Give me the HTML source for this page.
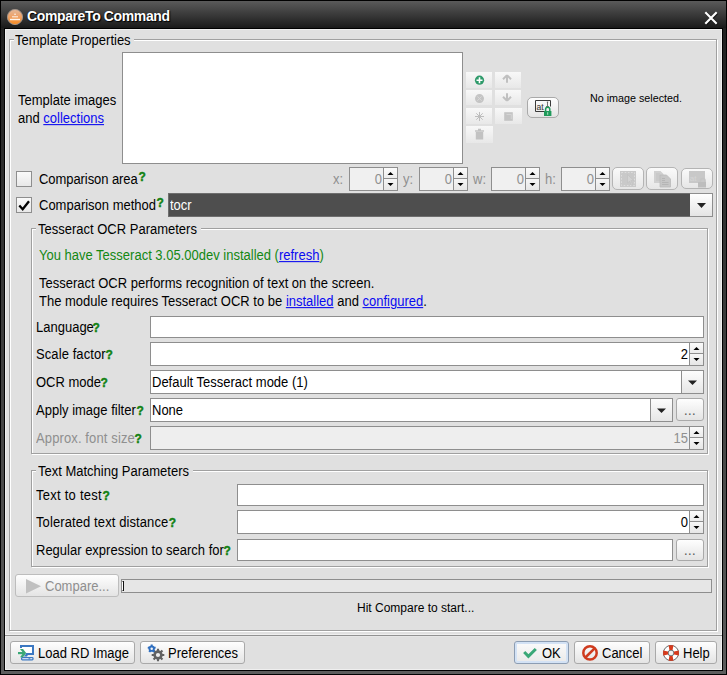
<!DOCTYPE html>
<html><head><meta charset="utf-8">
<style>
*{margin:0;padding:0;box-sizing:border-box}
html,body{width:727px;height:675px;overflow:hidden;background:#000}
body{position:relative;font-family:"Liberation Sans",sans-serif;font-size:13px;color:#000}
.a{position:absolute}
svg.a{overflow:visible}
.t{position:absolute;font-size:13px;line-height:15px;white-space:pre;color:#000;transform:scaleY(1.08);transform-origin:0 12px}
.q{color:#138213;font-weight:bold;font-size:12px;-webkit-text-stroke:0.4px #138213}
.lnk{color:#0a0af0;text-decoration:underline}
.dis{color:#8f8f8f}
.tb{position:absolute;background:linear-gradient(#f8f8f8,#e8e8e8)}
</style></head><body>

<div class="a" style="left:1px;top:1px;width:725px;height:673px;background:linear-gradient(#1e1e1e,#5c5c5c)"></div>
<div class="a" style="left:4px;top:28px;width:719px;height:643px;background:#000"></div>
<div class="a" style="left:1px;top:1px;width:725px;height:27px;background:linear-gradient(#5a5a5a,#1a1a1a)"></div>
<svg class="a" style="left:6px;top:8px;" width="18" height="18" viewBox="0 0 18 18"><defs><linearGradient id="ig" x1="0" y1="0" x2="0" y2="1"><stop offset="0" stop-color="#e2b89a"/><stop offset="0.45" stop-color="#eea36a"/><stop offset="1" stop-color="#f78a1e"/></linearGradient></defs>
<circle cx="9" cy="9" r="7.6" fill="url(#ig)" stroke="#a09288" stroke-width="1"/>
<rect x="8.3" y="5.6" width="1.5" height="1.3" fill="#fff" opacity="0.85"/>
<rect x="6" y="8.2" width="6" height="1.2" fill="#fff" opacity="0.75"/>
<rect x="4" y="10.8" width="10" height="1.4" fill="#fff" opacity="0.9"/></svg>
<div class="t" style="left:27px;top:9px;color:#fff;font-weight:bold;font-size:14px;letter-spacing:-0.38px;text-shadow:0 0 1px #000,1px 1px 1px #000">CompareTo Command</div>
<svg class="a" style="left:703px;top:10px;" width="16" height="16" viewBox="0 0 16 16"><path d="M2.3 2.3L13.7 13.7M13.7 2.3L2.3 13.7" stroke="#000" stroke-width="2.6" opacity="0.5" transform="translate(0.7,0.7)"/><path d="M2.3 2.3L13.7 13.7M13.7 2.3L2.3 13.7" stroke="#fff" stroke-width="2.1"/></svg>
<div class="a" style="left:5px;top:29px;width:717px;height:606px;background:#e0e0e0;border:1px solid #efefef"></div>
<div class="a" style="left:5px;top:635px;width:717px;height:1px;background:#929292"></div>
<div class="a" style="left:5px;top:636px;width:717px;height:34px;background:#e0e0e0;border:1px solid #efefef;border-top-color:#e6e6e6"></div>
<div class="a" style="left:9px;top:39px;width:708px;height:592px;border:1px solid #a0a0a0;box-shadow:1px 1px 0 #fff,inset 1px 1px 0 #fff"></div>
<div class="a" style="left:14px;top:38px;width:120px;height:4px;background:#e0e0e0"></div>
<div class="t" style="left:15px;top:33px;">Template Properties</div>
<div class="t" style="left:18px;top:93px;">Template images</div>
<div class="t" style="left:18px;top:111px;">and <span class="lnk">collections</span></div>
<div class="a" style="left:122px;top:52px;width:341px;height:112px;background:#fff;border:1px solid #8e8e8e"></div>
<div class="tb" style="left:466px;top:72px;width:26px;height:16px"></div>
<div class="tb" style="left:495px;top:72px;width:26px;height:16px"></div>
<div class="tb" style="left:466px;top:90px;width:26px;height:15px"></div>
<div class="tb" style="left:495px;top:90px;width:26px;height:15px"></div>
<div class="tb" style="left:466px;top:108px;width:26px;height:16px"></div>
<div class="tb" style="left:495px;top:108px;width:27px;height:16px"></div>
<div class="tb" style="left:466px;top:126px;width:27px;height:17px"></div>
<svg class="a" style="left:466px;top:72px;" width="56" height="72" viewBox="0 0 56 72">
 <circle cx="13.5" cy="8.2" r="4.6" fill="#2e9a6a"/>
 <path d="M13.5 5.2v6M10.5 8.2h6" stroke="#fff" stroke-width="1.6"/>
 <circle cx="13.5" cy="26.6" r="4.5" fill="#c4c4c4"/>
 <path d="M11.3 24.4l4.4 4.4M15.7 24.4l-4.4 4.4" stroke="#d8d8d8" stroke-width="1"/>
 <path d="M13.5 40v9M9 44.5h9M10.3 41.3l6.4 6.4M16.7 41.3l-6.4 6.4" stroke="#bdbdbd" stroke-width="1"/>
 <path d="M9 59h9M12 57.5h3" stroke="#c2c2c2" stroke-width="1.4"/>
 <rect x="9.8" y="60" width="7.4" height="7.5" fill="#c2c2c2"/>
 <path d="M41 3.2l-4 4M41 3.2l4 4M41 3.8v7" stroke="#c0c0c0" stroke-width="2"/>
 <path d="M41 28.8l-4-4M41 28.8l4-4M41 28.2v-7" stroke="#c0c0c0" stroke-width="2"/>
 <rect x="38.2" y="40.2" width="8.6" height="8.6" fill="#c4c4c4"/>
 <path d="M40.5 42.5h4.8v4.5" stroke="#d4d4d4" stroke-width="1" fill="none"/></svg>
<div class="a" style="left:527px;top:97px;width:32px;height:21px;border:1px solid #a9a9a9;border-radius:3px;background:linear-gradient(#fefefe,#e4e4e4);border-radius:5px"></div>
<svg class="a" style="left:534px;top:99px;" width="20" height="18" viewBox="0 0 20 18">
 <path d="M1.5 1.5h15v6M10 12.5H1.5v-11" stroke="#3a3a3a" stroke-width="1" fill="none"/>
 <text x="2.6" y="10.6" font-family="Liberation Sans" font-size="8.5" fill="#333">at</text>
 <path d="M13.5 3v4.5M12 7.5h3M12.8 3h1.4" stroke="#555" stroke-width="0.8"/>
 <path d="M11.6 12.5V10.3a2.1 2.1 0 0 1 4.2 0V12.5" stroke="#1f9a5a" stroke-width="1.5" fill="none"/>
 <rect x="10" y="12" width="7.4" height="5" fill="#1f9a5a"/>
 <path d="M13.7 13.2v2.6" stroke="#bfe6cf" stroke-width="0.9"/></svg>
<div class="a" style="left:590px;top:92px;font-size:10.75px;line-height:13px;white-space:pre">No image selected.</div>
<div class="a" style="left:16px;top:171px;width:16px;height:16px;border:1px solid #8e8e8e;background:linear-gradient(#fafafa,#e8e8e8)"></div>
<div class="t" style="left:39px;top:172px;letter-spacing:-0.07px">Comparison area</div>
<div class="t q" style="left:138.5px;top:170px;">?</div>
<div class="t dis" style="left:333px;top:172px;">x:</div>
<div class="t dis" style="left:403px;top:172px;">y:</div>
<div class="t dis" style="left:473px;top:172px;">w:</div>
<div class="t dis" style="left:545px;top:172px;">h:</div>
<div class="a" style="left:349px;top:167px;width:49px;height:24px;background:#f0f0f0;border:1px solid #8e8e8e"></div>
<div class="a" style="left:383px;top:168px;width:1px;height:22px;background:#8e8e8e"></div>
<div class="a" style="left:384px;top:168px;width:13px;height:10px;background:linear-gradient(#fbfbfb,#ececec)"></div>
<div class="a" style="left:384px;top:178px;width:13px;height:1px;background:#8e8e8e"></div>
<div class="a" style="left:384px;top:179px;width:13px;height:11px;background:linear-gradient(#f6f6f6,#e6e6e6)"></div>
<svg class="a" style="left:384px;top:167px;" width="13" height="23" viewBox="0 0 13 23"><polygon points="3.5,8.0 9.5,8.0 6.5,5.0" fill="#000"/><polygon points="3.5,16.0 9.5,16.0 6.5,19.0" fill="#000"/></svg>
<div class="t" style="left:282px;width:100px;text-align:right;top:172px;color:#8f8f8f">0</div>
<div class="a" style="left:419px;top:167px;width:49px;height:24px;background:#f0f0f0;border:1px solid #8e8e8e"></div>
<div class="a" style="left:453px;top:168px;width:1px;height:22px;background:#8e8e8e"></div>
<div class="a" style="left:454px;top:168px;width:13px;height:10px;background:linear-gradient(#fbfbfb,#ececec)"></div>
<div class="a" style="left:454px;top:178px;width:13px;height:1px;background:#8e8e8e"></div>
<div class="a" style="left:454px;top:179px;width:13px;height:11px;background:linear-gradient(#f6f6f6,#e6e6e6)"></div>
<svg class="a" style="left:454px;top:167px;" width="13" height="23" viewBox="0 0 13 23"><polygon points="3.5,8.0 9.5,8.0 6.5,5.0" fill="#000"/><polygon points="3.5,16.0 9.5,16.0 6.5,19.0" fill="#000"/></svg>
<div class="t" style="left:352px;width:100px;text-align:right;top:172px;color:#8f8f8f">0</div>
<div class="a" style="left:491px;top:167px;width:49px;height:24px;background:#f0f0f0;border:1px solid #8e8e8e"></div>
<div class="a" style="left:525px;top:168px;width:1px;height:22px;background:#8e8e8e"></div>
<div class="a" style="left:526px;top:168px;width:13px;height:10px;background:linear-gradient(#fbfbfb,#ececec)"></div>
<div class="a" style="left:526px;top:178px;width:13px;height:1px;background:#8e8e8e"></div>
<div class="a" style="left:526px;top:179px;width:13px;height:11px;background:linear-gradient(#f6f6f6,#e6e6e6)"></div>
<svg class="a" style="left:526px;top:167px;" width="13" height="23" viewBox="0 0 13 23"><polygon points="3.5,8.0 9.5,8.0 6.5,5.0" fill="#000"/><polygon points="3.5,16.0 9.5,16.0 6.5,19.0" fill="#000"/></svg>
<div class="t" style="left:424px;width:100px;text-align:right;top:172px;color:#8f8f8f">0</div>
<div class="a" style="left:561px;top:167px;width:49px;height:24px;background:#f0f0f0;border:1px solid #8e8e8e"></div>
<div class="a" style="left:595px;top:168px;width:1px;height:22px;background:#8e8e8e"></div>
<div class="a" style="left:596px;top:168px;width:13px;height:10px;background:linear-gradient(#fbfbfb,#ececec)"></div>
<div class="a" style="left:596px;top:178px;width:13px;height:1px;background:#8e8e8e"></div>
<div class="a" style="left:596px;top:179px;width:13px;height:11px;background:linear-gradient(#f6f6f6,#e6e6e6)"></div>
<svg class="a" style="left:596px;top:167px;" width="13" height="23" viewBox="0 0 13 23"><polygon points="3.5,8.0 9.5,8.0 6.5,5.0" fill="#000"/><polygon points="3.5,16.0 9.5,16.0 6.5,19.0" fill="#000"/></svg>
<div class="t" style="left:494px;width:100px;text-align:right;top:172px;color:#8f8f8f">0</div>
<div class="a" style="left:612px;top:167px;width:32px;height:23px;border:1px solid #a9a9a9;border-radius:3px;background:linear-gradient(#fefefe,#e4e4e4);border-color:#b4b4b4;border-radius:5px;background:linear-gradient(#fafafa,#e6e6e6)"></div>
<div class="a" style="left:646px;top:167px;width:32px;height:23px;border:1px solid #a9a9a9;border-radius:3px;background:linear-gradient(#fefefe,#e4e4e4);border-color:#b4b4b4;border-radius:5px;background:linear-gradient(#fafafa,#e6e6e6)"></div>
<div class="a" style="left:681px;top:168px;width:32px;height:21px;border:1px solid #a9a9a9;border-radius:3px;background:linear-gradient(#fefefe,#e4e4e4);border-color:#b4b4b4;border-radius:5px;background:linear-gradient(#fafafa,#e6e6e6)"></div>
<svg class="a" style="left:612px;top:167px;" width="101" height="23" viewBox="0 0 101 23">
 <rect x="8" y="4" width="16" height="16" fill="#c9c9c9"/>
 <rect x="9.5" y="5.5" width="13" height="13" fill="none" stroke="#e2e2e2" stroke-width="0.8" stroke-dasharray="1.6 1.6"/>
 <path d="M15.5 7.5V16.2L17.6 14.1L19.4 18.2L20.7 17.6L18.9 13.6H21.8Z" fill="#d2d2d2" stroke="#c0c0c0" stroke-width="0.6"/>
 <path d="M42 4H48.5L51.5 7V16H42Z" fill="#d0d0d0"/>
 <path d="M44 7h4M44 9h5M44 11h5M44 13h5" stroke="#bfbfbf" stroke-width="0.8"/>
 <path d="M48 8H54.5L58.5 12V20H48Z" fill="#c6c6c6" stroke="#bababa" stroke-width="0.8"/>
 <path d="M50 11.5h3M50 13.5h3M50 15.5h6.5M50 17.5h6.5" stroke="#b3b3b3" stroke-width="0.9"/>
 <rect x="77" y="4" width="16" height="12" fill="#c8c8c8"/>
 <text x="77.8" y="14" font-family="Liberation Sans" font-size="8" fill="#d6d6d6">at</text>
 <path d="M88.5 16v-2.3a2.3 2.3 0 0 1 4.6 0V16" stroke="#c4c4c4" stroke-width="1.5" fill="none"/>
 <rect x="86" y="15" width="8" height="5.5" fill="#bdbdbd"/></svg>
<div class="a" style="left:16px;top:197px;width:16px;height:16px;border:1px solid #8e8e8e;background:linear-gradient(#fafafa,#e8e8e8)"></div>
<svg class="a" style="left:16px;top:197px;" width="16" height="16" viewBox="0 0 16 16"><path d="M3.3 8.4l3.4 3.8L13 4.2" stroke="#000" stroke-width="2.3" fill="none"/></svg>
<div class="t" style="left:39px;top:198px;">Comparison method</div>
<div class="t q" style="left:156.5px;top:196px;">?</div>
<div class="a" style="left:168px;top:193px;width:545px;height:24px;background:#4e4e4e;border:1px solid #6e6e6e"></div>
<div class="t" style="left:170px;top:198px;color:#fff">tocr</div>
<div class="a" style="left:690px;top:193px;width:23px;height:24px;border:1px solid #8e8e8e;border-left:none;background:linear-gradient(#ffffff,#e4e4e4)"></div>
<svg class="a" style="left:691px;top:193px;" width="21" height="23" viewBox="0 0 21 23"><polygon points="6,10 15,10 10.5,15" fill="#222"/></svg>
<div class="a" style="left:31px;top:228px;width:677px;height:226px;border:1px solid #a0a0a0;box-shadow:1px 1px 0 #fff,inset 1px 1px 0 #fff"></div>
<div class="a" style="left:36px;top:227px;width:165px;height:4px;background:#e0e0e0"></div>
<div class="t" style="left:38px;top:222px;">Tesseract OCR Parameters</div>
<div class="t" style="left:39px;top:248px;color:#138813">You have Tesseract 3.05.00dev installed (<span class="lnk">refresh</span>)</div>
<div class="t" style="left:39px;top:276px;">Tesseract OCR performs recognition of text on the screen.</div>
<div class="t" style="left:39px;top:294px;">The module requires Tesseract OCR to be <span class="lnk">installed</span> and <span class="lnk">configured</span>.</div>
<div class="t" style="left:36px;top:320px;">Language</div>
<div class="t" style="left:92.4px;top:320px;"><span class="q">?</span></div>
<div class="t" style="left:36px;top:347px;letter-spacing:0.09px">Scale factor</div>
<div class="t" style="left:105.4px;top:347px;"><span class="q">?</span></div>
<div class="t" style="left:36px;top:375px;">OCR mode</div>
<div class="t" style="left:100.4px;top:375px;"><span class="q">?</span></div>
<div class="t" style="left:36px;top:403px;">Apply image filter</div>
<div class="t" style="left:136.5px;top:403px;"><span class="q">?</span></div>
<div class="t" style="left:36px;top:431px;letter-spacing:0.12px"><span class="dis">Approx. font size</span></div>
<div class="t" style="left:134.4px;top:431px;"><span class="q">?</span></div>
<div class="a" style="left:150px;top:316px;width:554px;height:22px;background:#fff;border:1px solid #8e8e8e"></div>
<div class="a" style="left:150px;top:342px;width:554px;height:24px;background:#fff;border:1px solid #8e8e8e"></div>
<div class="a" style="left:689px;top:343px;width:1px;height:22px;background:#8e8e8e"></div>
<div class="a" style="left:690px;top:343px;width:13px;height:10px;background:linear-gradient(#fbfbfb,#ececec)"></div>
<div class="a" style="left:690px;top:353px;width:13px;height:1px;background:#8e8e8e"></div>
<div class="a" style="left:690px;top:354px;width:13px;height:11px;background:linear-gradient(#f6f6f6,#e6e6e6)"></div>
<svg class="a" style="left:690px;top:342px;" width="13" height="23" viewBox="0 0 13 23"><polygon points="3.5,8.0 9.5,8.0 6.5,5.0" fill="#000"/><polygon points="3.5,16.0 9.5,16.0 6.5,19.0" fill="#000"/></svg>
<div class="t" style="left:588px;width:100px;text-align:right;top:347px;color:#000">2</div>
<div class="a" style="left:150px;top:370px;width:554px;height:24px;background:#fff;border:1px solid #8e8e8e"></div>
<div class="a" style="left:681px;top:371px;width:1px;height:22px;background:#8e8e8e"></div>
<div class="a" style="left:682px;top:371px;width:21px;height:22px;background:linear-gradient(#fdfdfd,#e6e6e6)"></div>
<svg class="a" style="left:682px;top:370px;" width="21" height="23" viewBox="0 0 21 23"><polygon points="6.0,10.5 15.0,10.5 10.5,15.0" fill="#222"/></svg>
<div class="t" style="left:152px;top:375px;">Default Tesseract mode (1)</div>
<div class="a" style="left:150px;top:398px;width:523px;height:24px;background:#fff;border:1px solid #8e8e8e"></div>
<div class="a" style="left:650px;top:399px;width:1px;height:22px;background:#8e8e8e"></div>
<div class="a" style="left:651px;top:399px;width:21px;height:22px;background:linear-gradient(#fdfdfd,#e6e6e6)"></div>
<svg class="a" style="left:651px;top:398px;" width="21" height="23" viewBox="0 0 21 23"><polygon points="6.0,10.5 15.0,10.5 10.5,15.0" fill="#222"/></svg>
<div class="t" style="left:152px;top:403px;">None</div>
<div class="a" style="left:676px;top:398px;width:28px;height:23px;border:1px solid #a9a9a9;border-radius:3px;background:linear-gradient(#fefefe,#e4e4e4);"></div>
<div class="t" style="left:684px;top:403px;color:#555;letter-spacing:0.4px">...</div>
<div class="a" style="left:150px;top:426px;width:554px;height:24px;background:#eeeeee;border:1px solid #8e8e8e"></div>
<div class="a" style="left:689px;top:427px;width:1px;height:22px;background:#8e8e8e"></div>
<div class="a" style="left:690px;top:427px;width:13px;height:10px;background:linear-gradient(#fbfbfb,#ececec)"></div>
<div class="a" style="left:690px;top:437px;width:13px;height:1px;background:#8e8e8e"></div>
<div class="a" style="left:690px;top:438px;width:13px;height:11px;background:linear-gradient(#f6f6f6,#e6e6e6)"></div>
<svg class="a" style="left:690px;top:426px;" width="13" height="23" viewBox="0 0 13 23"><polygon points="3.5,8.0 9.5,8.0 6.5,5.0" fill="#000"/><polygon points="3.5,16.0 9.5,16.0 6.5,19.0" fill="#000"/></svg>
<div class="t" style="left:588px;width:100px;text-align:right;top:431px;color:#8f8f8f">15</div>
<div class="a" style="left:31px;top:470px;width:677px;height:97px;border:1px solid #a0a0a0;box-shadow:1px 1px 0 #fff,inset 1px 1px 0 #fff"></div>
<div class="a" style="left:36px;top:469px;width:157px;height:4px;background:#e0e0e0"></div>
<div class="t" style="left:38px;top:464px;">Text Matching Parameters</div>
<div class="t" style="left:36px;top:488px;letter-spacing:0.25px">Text to test</div>
<div class="t" style="left:102.4px;top:488px;"><span class="q">?</span></div>
<div class="t" style="left:36px;top:515px;letter-spacing:0.1px">Tolerated text distance</div>
<div class="t" style="left:168.8px;top:515px;"><span class="q">?</span></div>
<div class="t" style="left:36px;top:543px;">Regular expression to search for</div>
<div class="t" style="left:223.4px;top:543px;"><span class="q">?</span></div>
<div class="a" style="left:237px;top:484px;width:467px;height:22px;background:#fff;border:1px solid #8e8e8e"></div>
<div class="a" style="left:237px;top:510px;width:467px;height:24px;background:#fff;border:1px solid #8e8e8e"></div>
<div class="a" style="left:689px;top:511px;width:1px;height:22px;background:#8e8e8e"></div>
<div class="a" style="left:690px;top:511px;width:13px;height:10px;background:linear-gradient(#fbfbfb,#ececec)"></div>
<div class="a" style="left:690px;top:521px;width:13px;height:1px;background:#8e8e8e"></div>
<div class="a" style="left:690px;top:522px;width:13px;height:11px;background:linear-gradient(#f6f6f6,#e6e6e6)"></div>
<svg class="a" style="left:690px;top:510px;" width="13" height="23" viewBox="0 0 13 23"><polygon points="3.5,8.0 9.5,8.0 6.5,5.0" fill="#000"/><polygon points="3.5,16.0 9.5,16.0 6.5,19.0" fill="#000"/></svg>
<div class="t" style="left:588px;width:100px;text-align:right;top:515px;color:#000">0</div>
<div class="a" style="left:237px;top:539px;width:436px;height:22px;background:#fff;border:1px solid #8e8e8e"></div>
<div class="a" style="left:676px;top:539px;width:28px;height:22px;border:1px solid #a9a9a9;border-radius:3px;background:linear-gradient(#fefefe,#e4e4e4);"></div>
<div class="t" style="left:684px;top:543px;color:#555;letter-spacing:0.4px">...</div>
<div class="a" style="left:15px;top:574px;width:104px;height:23px;border:1px solid #a9a9a9;border-radius:3px;background:linear-gradient(#fefefe,#e4e4e4);border-color:#bdbdbd"></div>
<svg class="a" style="left:25px;top:578px;" width="17" height="17" viewBox="0 0 17 17"><path d="M1 1L16 8.2L1 15.5z" fill="#c0c0c0"/></svg>
<div class="t dis" style="left:45px;top:579px;">Compare...</div>
<div class="a" style="left:121px;top:579px;width:591px;height:14px;border:1px solid #8e8e8e;background:#e6e6e6"></div>
<div class="a" style="left:122px;top:581px;width:2px;height:10px;border:1px solid #111;border-left-color:#fff;background:#fff"></div>
<div class="a" style="left:357px;top:601px;font-size:12px;line-height:14px;white-space:pre">Hit Compare to start...</div>
<div class="a" style="left:10px;top:641px;width:125px;height:23px;border:1px solid #a9a9a9;border-radius:3px;background:linear-gradient(#fefefe,#e4e4e4);"></div>
<svg class="a" style="left:14px;top:641px;" width="24" height="24" viewBox="0 0 24 24">
 <rect x="7" y="5" width="12" height="8" fill="#fff"/>
 <path d="M7 6.9V5H19V13H11.8" stroke="#3b78c2" stroke-width="2" fill="none" stroke-linejoin="miter"/>
 <polygon points="11.2,13.6 14.2,13.6 13,15.6 10,15.6" fill="#3b78c2"/>
 <rect x="7.6" y="16.6" width="11.4" height="2.3" rx="0.8" fill="#fff" stroke="#3b78c2" stroke-width="1.3"/>
 <path d="M14.5 17.8h1.8" stroke="#3b78c2" stroke-width="1"/>
 <rect x="4" y="11" width="5.5" height="2.2" fill="#3aa876"/>
 <polygon points="6,8 9,8 12.2,12.1 9,16.2 6,16.2 9.2,12.1" fill="#3aa876"/></svg>
<div class="t" style="left:38px;top:646px;">Load RD Image</div>
<div class="a" style="left:140px;top:641px;width:105px;height:23px;border:1px solid #a9a9a9;border-radius:3px;background:linear-gradient(#fefefe,#e4e4e4);"></div>
<svg class="a" style="left:143px;top:641px;" width="24" height="24" viewBox="0 0 24 24">
 <g transform="translate(15,14)">
  <circle r="3.4" fill="none" stroke="#626262" stroke-width="2.6"/>
  <path d="M0 -6.3V-3.5M0 6.3V3.5M-6.3 0H-3.5M6.3 0H3.5M-4.45 -4.45L-2.5 -2.5M4.45 4.45L2.5 2.5M-4.45 4.45L-2.5 2.5M4.45 -4.45L2.5 -2.5" stroke="#626262" stroke-width="2.1"/>
 </g>
 <g transform="translate(8.7,7.7)">
  <circle r="2.2" fill="none" stroke="#2f6fc0" stroke-width="1.9"/>
  <path d="M0 -4.1V-2M3.9 -1.27L2 -0.6M2.41 3.32L1.2 1.6M-2.41 3.32L-1.2 1.6M-3.9 -1.27L-2 -0.6" stroke="#2f6fc0" stroke-width="2"/>
 </g></svg>
<div class="t" style="left:168px;top:646px;">Preferences</div>
<div class="a" style="left:514px;top:641px;width:55px;height:23px;border:1px solid #8c9db3;border-radius:3px;background:linear-gradient(#fbfbfb,#e9e9e9);box-shadow:inset 0 0 0 2px #d3e2f5"></div>
<svg class="a" style="left:516px;top:641px;" width="24" height="24" viewBox="0 0 24 24"><path d="M8.2 11L12.4 15.4L19.8 8" stroke="#3aa878" stroke-width="3" fill="none"/></svg>
<div class="t" style="left:542px;top:646px;">OK</div>
<div class="a" style="left:574px;top:641px;width:76px;height:23px;border:1px solid #a9a9a9;border-radius:3px;background:linear-gradient(#fefefe,#e4e4e4);"></div>
<svg class="a" style="left:578px;top:641px;" width="24" height="24" viewBox="0 0 24 24"><circle cx="12" cy="11.9" r="6.7" fill="none" stroke="#cf3b1e" stroke-width="2.5"/><path d="M16.6 7.3L7.4 16.5" stroke="#cf3b1e" stroke-width="2.5"/></svg>
<div class="t" style="left:602px;top:646px;">Cancel</div>
<div class="a" style="left:655px;top:641px;width:62px;height:23px;border:1px solid #a9a9a9;border-radius:3px;background:linear-gradient(#fefefe,#e4e4e4);"></div>
<svg class="a" style="left:659px;top:641px;" width="24" height="24" viewBox="0 0 24 24">
 <circle cx="12" cy="12" r="7.6" fill="#fff" stroke="#5a5a5a" stroke-width="0.9"/>
 <circle cx="12" cy="12" r="2.9" fill="#f2f2f2" stroke="#5a5a5a" stroke-width="0.9"/>
 <path d="M9.6 4.2h4.8l-0.8 4.8h-3.2z M9.6 19.8h4.8l-0.8-4.8h-3.2z M4.2 9.6v4.8l4.8-0.8v-3.2z M19.8 9.6v4.8l-4.8-0.8v-3.2z" fill="#d63a1c"/></svg>
<div class="t" style="left:683px;top:646px;">Help</div>
</body></html>
